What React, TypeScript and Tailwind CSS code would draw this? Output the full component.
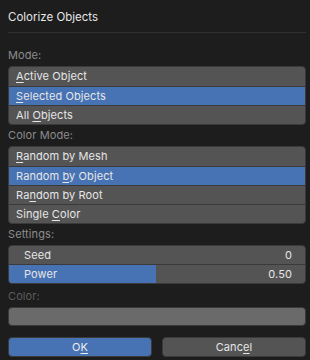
import React from 'react'

const font = { fontFamily: 'Inter, "DejaVu Sans", sans-serif' }

function Mn({ text, at }: { text: string; at: number }) {
  return (
    <>
      {text.slice(0, at)}
      <span className="underline underline-offset-2">{text[at]}</span>
      {text.slice(at + 1)}
    </>
  )
}

function OptionList({ items, selected }: { items: [string, number][]; selected: number }) {
  return (
    <div className="flex flex-col rounded-[4px] border border-[#3a3a3a] bg-[#545454] overflow-hidden">
      {items.map(([label, at], i) => (
        <div
          key={label}
          className={`h-[19px] flex items-center px-[7px] text-[11px] tracking-[0.1px] text-[#e6e6e6] ${
            i > 0 ? 'border-t border-[#3a3a3a]' : ''
          } ${i === selected ? 'bg-[#4772b3]' : ''}`}
        >
          <span>{at >= 0 ? <Mn text={label} at={at} /> : label}</span>
        </div>
      ))}
    </div>
  )
}

function Label({ children, dim }: { children: React.ReactNode; dim?: boolean }) {
  return (
    <div className={`text-[11px] tracking-[0.1px] leading-[14px] ${dim ? 'text-[#5c5c5c]' : 'text-[#8c8c8c]'} mb-[4px]`}>
      {children}
    </div>
  )
}

export default function App() {
  return (
    <div className="w-[310px] h-[360px] bg-[#1d1d1d] pl-[8px] pr-[4px] pt-[9px] flex flex-col" style={font}>
      <div className="text-[11.5px] leading-[16px] text-[#e6e6e6]">Colorize Objects</div>
      <div className="h-px bg-[#303030] mt-[7px]" />

      <div className="mt-[15px]">
        <Label>Mode:</Label>
        <OptionList
          items={[
            ['Active Object', 0],
            ['Selected Objects', 0],
            ['All Objects', 4],
          ]}
          selected={1}
        />
      </div>

      <div className="mt-[3px]">
        <Label>Color Mode:</Label>
        <OptionList
          items={[
            ['Random by Mesh', 0],
            ['Random by Object', 7],
            ['Random by Root', 2],
            ['Single Color', 7],
          ]}
          selected={1}
        />
      </div>

      <div className="mt-[3px]">
        <Label>Settings:</Label>
        <div className="flex flex-col rounded-[4px] border border-[#3a3a3a] bg-[#545454] overflow-hidden text-[11px] tracking-[0.1px] text-[#e6e6e6]">
          <div className="h-[18px] flex items-center justify-between pl-[15px] pr-[13px]">
            <span>Seed</span>
            <span>0</span>
          </div>
          <div className="relative h-[19px] border-t border-[#3a3a3a]">
            <div className="absolute left-0 top-0 bottom-0 w-[147px] bg-[#4772b3]" />
            <div className="relative h-full flex items-center justify-between pl-[15px] pr-[13px]">
              <span>Power</span>
              <span>0.50</span>
            </div>
          </div>
        </div>
      </div>

      <div className="mt-[5px]">
        <Label dim>Color:</Label>
        <div className="h-[19px] rounded-[4px] border border-[#3a3a3a] bg-[#6a6a6a]" />
      </div>

      <div className="mt-[11px] flex gap-[10px]">
        <div className="flex-1 h-[20px] rounded-[4px] bg-[#4772b3] border border-[#3a3a3a] flex items-center justify-center text-[11px] tracking-[0.1px] text-[#ececec]">
          <Mn text="OK" at={1} />
        </div>
        <div className="flex-1 h-[20px] rounded-[4px] bg-[#545454] border border-[#3a3a3a] flex items-center justify-center text-[11px] tracking-[0.1px] text-[#e6e6e6]">
          <Mn text="Cancel" at={4} />
        </div>
      </div>
    </div>
  )
}
